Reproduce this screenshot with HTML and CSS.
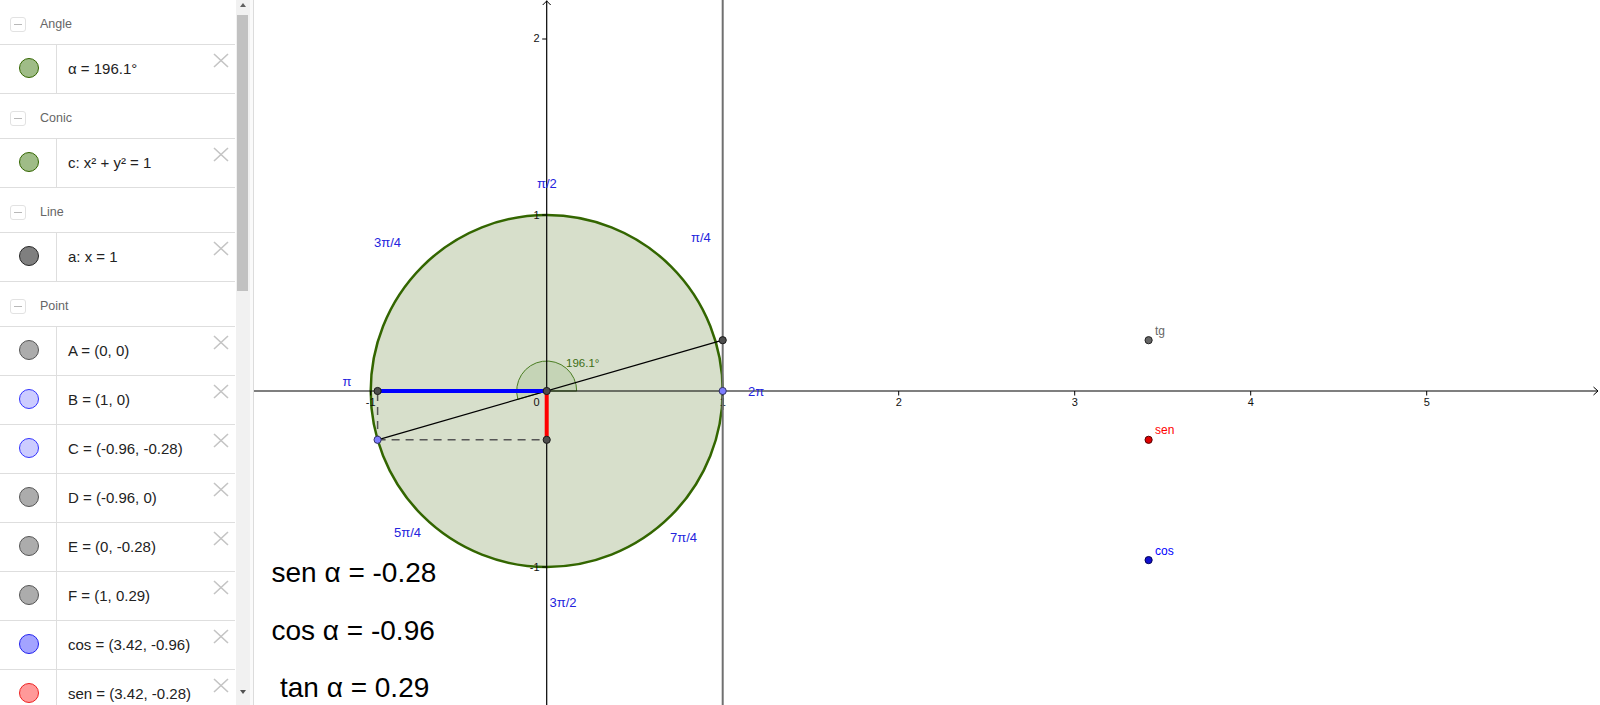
FILE: index.html
```html
<!DOCTYPE html>
<html>
<head>
<meta charset="utf-8">
<link rel="stylesheet" href="styles.css">
</head>
<body>
<div class="app">
  <div class="panel">
    <div class="list">
      <div class="hdr first"><span class="toggle"></span><span class="hlabel">Angle</span></div>
      <div class="item"><div class="mark"><span class="dot d-green"></span></div><div class="expr">α = 196.1°</div><svg class="close" viewBox="0 0 16 15"><path d="M1 1L15 14M15 1L1 14"/></svg></div>
      <div class="hdr"><span class="toggle"></span><span class="hlabel">Conic</span></div>
      <div class="item"><div class="mark"><span class="dot d-green"></span></div><div class="expr">c: x² + y² = 1</div><svg class="close" viewBox="0 0 16 15"><path d="M1 1L15 14M15 1L1 14"/></svg></div>
      <div class="hdr"><span class="toggle"></span><span class="hlabel">Line</span></div>
      <div class="item"><div class="mark"><span class="dot d-dark"></span></div><div class="expr">a: x = 1</div><svg class="close" viewBox="0 0 16 15"><path d="M1 1L15 14M15 1L1 14"/></svg></div>
      <div class="hdr"><span class="toggle"></span><span class="hlabel">Point</span></div>
      <div class="item"><div class="mark"><span class="dot d-gray"></span></div><div class="expr">A = (0, 0)</div><svg class="close" viewBox="0 0 16 15"><path d="M1 1L15 14M15 1L1 14"/></svg></div>
      <div class="item"><div class="mark"><span class="dot d-lblue"></span></div><div class="expr">B = (1, 0)</div><svg class="close" viewBox="0 0 16 15"><path d="M1 1L15 14M15 1L1 14"/></svg></div>
      <div class="item"><div class="mark"><span class="dot d-lblue"></span></div><div class="expr">C = (-0.96, -0.28)</div><svg class="close" viewBox="0 0 16 15"><path d="M1 1L15 14M15 1L1 14"/></svg></div>
      <div class="item"><div class="mark"><span class="dot d-gray"></span></div><div class="expr">D = (-0.96, 0)</div><svg class="close" viewBox="0 0 16 15"><path d="M1 1L15 14M15 1L1 14"/></svg></div>
      <div class="item"><div class="mark"><span class="dot d-gray"></span></div><div class="expr">E = (0, -0.28)</div><svg class="close" viewBox="0 0 16 15"><path d="M1 1L15 14M15 1L1 14"/></svg></div>
      <div class="item"><div class="mark"><span class="dot d-gray"></span></div><div class="expr">F = (1, 0.29)</div><svg class="close" viewBox="0 0 16 15"><path d="M1 1L15 14M15 1L1 14"/></svg></div>
      <div class="item"><div class="mark"><span class="dot d-blue"></span></div><div class="expr">cos = (3.42, -0.96)</div><svg class="close" viewBox="0 0 16 15"><path d="M1 1L15 14M15 1L1 14"/></svg></div>
      <div class="item"><div class="mark"><span class="dot d-red"></span></div><div class="expr">sen = (3.42, -0.28)</div><svg class="close" viewBox="0 0 16 15"><path d="M1 1L15 14M15 1L1 14"/></svg></div>
    </div>
    <div class="scrollbar">
      <div class="sb-btn"><span class="tri-up"></span></div>
      <div class="thumb"></div>
      <div class="sb-fill"></div>
      <div class="sb-btn bottom"><span class="tri-down"></span></div>
    </div>
  </div>
  <div class="gutter"></div>
  <div class="graph">
    <svg class="canvas" width="1346" height="705" viewBox="254 0 1346 705">
      <!-- circle -->
      <circle cx="546.7" cy="391" r="176" fill="#d7dfcb" stroke="#336600" stroke-width="2.5"/>
      <!-- angle sector -->
      <path d="M546.7 391 L576.7 391 A30 30 0 1 0 517.87 399.32 Z" fill="#c5d4b6" stroke="#4a7d22" stroke-width="1"/>
      <!-- line a: x = 1 -->
      <line x1="722.7" y1="0" x2="722.7" y2="705" stroke="#707070" stroke-width="2"/>
      <!-- axes -->
      <line x1="254" y1="391" x2="1598" y2="391" stroke="#000" stroke-width="1.2"/>
      <path d="M1593.5 387 L1598 391 L1593.5 395" fill="none" stroke="#000" stroke-width="1"/>
      <line x1="546.7" y1="0.5" x2="546.7" y2="705" stroke="#000" stroke-width="1.2"/>
      <path d="M542.7 5 L546.7 1 L550.7 5" fill="none" stroke="#000" stroke-width="1"/>
      <!-- ticks -->
      <g stroke="#000" stroke-width="1">
        <line x1="370.7" y1="391" x2="370.7" y2="395.5"/>
        <line x1="722.7" y1="391" x2="722.7" y2="395.5"/>
        <line x1="898.7" y1="391" x2="898.7" y2="395.5"/>
        <line x1="1074.7" y1="391" x2="1074.7" y2="395.5"/>
        <line x1="1250.7" y1="391" x2="1250.7" y2="395.5"/>
        <line x1="1426.7" y1="391" x2="1426.7" y2="395.5"/>
        <line x1="542.2" y1="39" x2="546.7" y2="39"/>
        <line x1="542.2" y1="215" x2="546.7" y2="215"/>
        <line x1="542.2" y1="567" x2="546.7" y2="567"/>
      </g>
      <g class="tick">
        <text x="539.5" y="42" text-anchor="end">2</text>
        <text x="539.5" y="218.5" text-anchor="end">1</text>
        <text x="539.5" y="570.5" text-anchor="end">-1</text>
        <text x="539.5" y="406" text-anchor="end">0</text>
        <text x="370.7" y="406" text-anchor="middle">-1</text>
        <text x="722.7" y="406" text-anchor="middle">1</text>
        <text x="898.7" y="406" text-anchor="middle">2</text>
        <text x="1074.7" y="406" text-anchor="middle">3</text>
        <text x="1250.7" y="406" text-anchor="middle">4</text>
        <text x="1426.7" y="406" text-anchor="middle">5</text>
      </g>
      <!-- re-draw line a over its tick label -->
      <line x1="722.7" y1="396" x2="722.7" y2="410" stroke="#707070" stroke-width="2"/>
      <!-- dashed helpers -->
      <g stroke="#555" stroke-width="1.5" stroke-dasharray="8 6" fill="none">
        <line x1="377.6" y1="439.8" x2="546.7" y2="439.8"/>
        <line x1="377.6" y1="393" x2="377.6" y2="439.8"/>
      </g>
      <!-- radius through C to F -->
      <line x1="377.6" y1="439.8" x2="722.7" y2="340.2" stroke="#000" stroke-width="1.2"/>
      <!-- sin / cos segments -->
      <line x1="377.6" y1="391" x2="546.7" y2="391" stroke="#0000ff" stroke-width="4"/>
      <line x1="546.7" y1="391" x2="546.7" y2="439.8" stroke="#ff0000" stroke-width="4"/>
      <!-- points -->
      <g stroke-width="1">
        <circle cx="546.7" cy="391" r="3.6" fill="#4d4d4d" stroke="#1a1a1a"/>
        <circle cx="377.6" cy="391" r="3.6" fill="#4d4d4d" stroke="#1a1a1a"/>
        <circle cx="546.7" cy="439.8" r="3.6" fill="#4d4d4d" stroke="#1a1a1a"/>
        <circle cx="722.7" cy="340.2" r="3.6" fill="#4d4d4d" stroke="#1a1a1a"/>
        <circle cx="722.7" cy="391" r="3.6" fill="#7d7dff" stroke="#333366"/>
        <circle cx="377.6" cy="439.8" r="3.6" fill="#7d7dff" stroke="#333366"/>
        <circle cx="1148.6" cy="340.2" r="3.6" fill="#666" stroke="#222"/>
        <circle cx="1148.6" cy="439.8" r="3.6" fill="#e00000" stroke="#550000"/>
        <circle cx="1148.6" cy="560.1" r="3.6" fill="#1010d0" stroke="#000055"/>
      </g>
      <!-- point labels -->
      <text class="plabel" x="1155" y="335" fill="#666">tg</text>
      <text class="plabel" x="1155" y="434" fill="#ff0000">sen</text>
      <text class="plabel" x="1155" y="555" fill="#0000ff">cos</text>
      <!-- angle label -->
      <text class="alabel" x="566" y="366.5">196.1°</text>
      <!-- radian labels -->
      <g class="rad">
        <text x="537" y="188">π/2</text>
        <text x="691" y="241.5">π/4</text>
        <text x="374" y="247">3π/4</text>
        <text x="342.5" y="385.5">π</text>
        <text x="748" y="396">2π</text>
        <text x="394" y="537">5π/4</text>
        <text x="670" y="542">7π/4</text>
        <text x="549.5" y="607">3π/2</text>
      </g>
      <!-- big texts -->
      <g class="big">
        <text x="271.5" y="581.5">sen α = -0.28</text>
        <text x="271.5" y="640">cos α = -0.96</text>
        <text x="280" y="696.5">tan α = 0.29</text>
      </g>
    </svg>
  </div>
</div>
</body>
</html>
```
FILE: styles.css
```css
html, body {
  margin: 0;
  padding: 0;
  background: #fff;
  overflow: hidden;
}
.app {
  display: flex;
  width: 1600px;
  height: 705px;
  font-family: "Liberation Sans", Arial, sans-serif;
}
.panel {
  display: flex;
  width: 250px;
  height: 705px;
  flex: none;
}
.list {
  width: 236px;
  height: 705px;
  overflow: hidden;
  flex: none;
}
.hdr {
  box-sizing: border-box;
  height: 45px;
  border-bottom: 1px solid #dedede;
  display: flex;
  align-items: center;
  padding-top: 4px;
  width: 235px;
}
.hdr.first {
  height: 45px;
}
.toggle {
  box-sizing: border-box;
  width: 16px;
  height: 15px;
  margin-left: 10px;
  border: 1px solid #e2e2e2;
  border-radius: 3px;
  position: relative;
}
.toggle::after {
  content: "";
  position: absolute;
  left: 3px;
  right: 3px;
  top: 6px;
  height: 1px;
  background: #b8b8b8;
}
.hlabel {
  margin-left: 14px;
  font-size: 12.5px;
  color: #666;
}
.item {
  box-sizing: border-box;
  height: 49px;
  width: 235px;
  border-bottom: 1px solid #dedede;
  display: flex;
  align-items: stretch;
}
.mark {
  width: 56px;
  border-right: 1px solid #dedede;
  display: flex;
  align-items: center;
  justify-content: center;
  flex: none;
}
.dot {
  box-sizing: border-box;
  width: 20px;
  height: 20px;
  border-radius: 50%;
  border: 1px solid #333;
  margin-left: 1px;
  margin-bottom: 2px;
}
.d-green { background: #9fbc87; border-color: #336600; }
.d-dark { background: #7f7f7f; border-color: #262626; }
.d-gray { background: #acacac; border-color: #555; }
.d-lblue { background: #ccccff; border-color: #3333ff; }
.d-blue { background: #a3a3ff; border-color: #2222ee; }
.d-red { background: #ff9999; border-color: #ee2222; }
.expr {
  flex: 1;
  display: flex;
  align-items: center;
  padding-left: 11px;
  padding-bottom: 2px;
  font-size: 15px;
  color: #222;
  white-space: nowrap;
}
.close {
  width: 16px;
  height: 15px;
  margin-top: 8px;
  margin-right: 6px;
  flex: none;
  fill: none;
  stroke: #c4c4c4;
  stroke-width: 1.6;
}
.scrollbar {
  width: 14px;
  height: 705px;
  background: #f1f1f1;
  display: flex;
  flex-direction: column;
  flex: none;
}
.sb-btn {
  height: 15px;
  display: flex;
  justify-content: center;
  align-items: center;
  flex: none;
}
.sb-btn.bottom {
  height: 20px;
  align-items: flex-start;
  padding-top: 3px;
  box-sizing: border-box;
}
.tri-up {
  width: 0;
  height: 0;
  border-left: 3.5px solid transparent;
  border-right: 3.5px solid transparent;
  border-bottom: 4px solid #606060;
  margin-top: -6px;
}
.tri-down {
  width: 0;
  height: 0;
  border-left: 3.5px solid transparent;
  border-right: 3.5px solid transparent;
  border-top: 4px solid #505050;
  margin-top: 2px;
}
.thumb {
  height: 276px;
  margin: 0 2px 0 1px;
  background: #c1c1c1;
  flex: none;
}
.sb-fill {
  flex: 1;
}
.gutter {
  width: 3px;
  background: #fafafa;
  border-right: 1px solid #dcdcdc;
  flex: none;
}
.graph {
  flex: 1;
  height: 705px;
}
.canvas {
  display: block;
}
.tick text {
  font-family: "Liberation Sans", Arial, sans-serif;
  font-size: 11px;
  fill: #111;
}
.plabel {
  font-family: "Liberation Sans", Arial, sans-serif;
  font-size: 12px;
}
.alabel {
  font-family: "Liberation Sans", Arial, sans-serif;
  font-size: 11.5px;
  fill: #3d6e14;
}
.rad text {
  font-family: "Liberation Sans", Arial, sans-serif;
  font-size: 13px;
  fill: #2424dd;
}
.big text {
  font-family: "Liberation Sans", Arial, sans-serif;
  font-size: 28px;
  fill: #000;
}
```
